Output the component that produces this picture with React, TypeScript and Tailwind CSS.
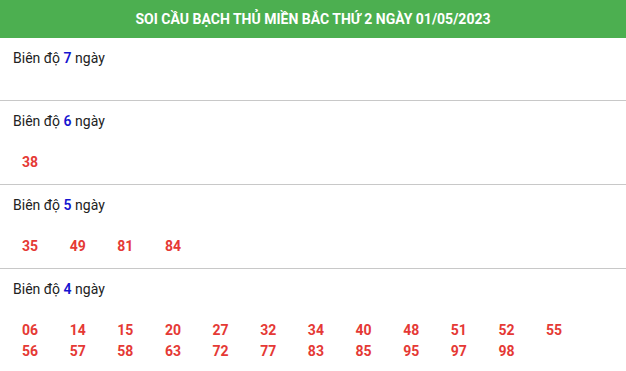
const sections = [
  { days: 7, nums: [] as string[] },
  { days: 6, nums: ["38"] },
  { days: 5, nums: ["35", "49", "81", "84"] },
  {
    days: 4,
    nums: [
      "06", "14", "15", "20", "27", "32", "34", "40", "48", "51", "52", "55",
      "56", "57", "58", "63", "72", "77", "83", "85", "95", "97", "98",
    ],
  },
];

export default function App() {
  return (
    <div className="w-[626px] bg-white font-['Roboto',sans-serif] text-[#222]">
      <div className="flex h-[38px] items-center justify-center bg-[#4caf50] text-[14px] font-bold text-white">
        SOI CẦU BẠCH THỦ MIỀN BẮC THỨ 2 NGÀY 01/05/2023
      </div>

      {sections.map((s) => (
        <div key={s.days} className="border-b border-[#c8c8c8] pb-[11px] pt-[11px]">
          <div className="h-5 pl-[13px] text-[14px] leading-[19px]">
            Biên độ <span className="font-semibold text-[#1515d0]">{s.days}</span> ngày
          </div>
          <div className="mt-5 flex flex-wrap pl-[22px]">
            {s.nums.map((n) => (
              <span
                key={n}
                className="w-[47.65px] text-[14px] font-bold leading-[21px] text-[#e53935]"
              >
                {n}
              </span>
            ))}
          </div>
        </div>
      ))}
    </div>
  );
}
